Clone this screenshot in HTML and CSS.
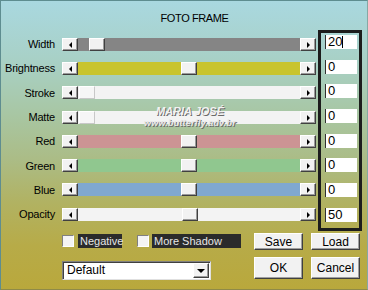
FILE: index.html
```html
<!DOCTYPE html>
<html lang="en">
<head>
    <meta charset="UTF-8">
    <title>Foto Frame</title>
    <link rel="stylesheet" href="styles.css">
</head>
<body>
<div class="dialog">
    <div class="title">FOTO FRAME</div>

    <div class="main">
        <div class="sliders">
            <div class="row">
                <span class="label">Width</span>
                <div class="scroll">
                    <span class="arrow left"></span>
                    <div class="track gray"><span class="thumb" style="left: 11px"></span></div>
                    <span class="arrow right"></span>
                </div>
            </div>
            <div class="row">
                <span class="label">Brightness</span>
                <div class="scroll">
                    <span class="arrow left"></span>
                    <div class="track yellow"><span class="thumb" style="left: 103px"></span></div>
                    <span class="arrow right"></span>
                </div>
            </div>
            <div class="row">
                <span class="label">Stroke</span>
                <div class="scroll">
                    <span class="arrow left"></span>
                    <div class="track white"><span class="thumb faded" style="left: 1px"></span></div>
                    <span class="arrow right"></span>
                </div>
            </div>
            <div class="row">
                <span class="label">Matte</span>
                <div class="scroll">
                    <span class="arrow left"></span>
                    <div class="track white"><span class="thumb faded" style="left: 1px"></span></div>
                    <span class="arrow right"></span>
                </div>
            </div>
            <div class="row">
                <span class="label">Red</span>
                <div class="scroll">
                    <span class="arrow left"></span>
                    <div class="track red"><span class="thumb" style="left: 103px"></span></div>
                    <span class="arrow right"></span>
                </div>
            </div>
            <div class="row">
                <span class="label">Green</span>
                <div class="scroll">
                    <span class="arrow left"></span>
                    <div class="track green"><span class="thumb" style="left: 103px"></span></div>
                    <span class="arrow right"></span>
                </div>
            </div>
            <div class="row">
                <span class="label">Blue</span>
                <div class="scroll">
                    <span class="arrow left"></span>
                    <div class="track blue"><span class="thumb" style="left: 103px"></span></div>
                    <span class="arrow right"></span>
                </div>
            </div>
            <div class="row">
                <span class="label">Opacity</span>
                <div class="scroll">
                    <span class="arrow left"></span>
                    <div class="track white"><span class="thumb" style="left: 104px"></span></div>
                    <span class="arrow right"></span>
                </div>
            </div>
        </div>

        <!-- value boxes inside the black frame -->
        <div class="values">
            <div class="field">20<span class="caret"></span></div>
            <div class="field">0</div>
            <div class="field">0</div>
            <div class="field">0</div>
            <div class="field">0</div>
            <div class="field">0</div>
            <div class="field">0</div>
            <div class="field">50</div>
        </div>
    </div>

    <div class="bottom">
        <div class="opts">
            <div class="checks">
                <span class="check"></span>
                <span class="check-label neg">Negative</span>
                <span class="check second"></span>
                <span class="check-label shadow">More Shadow</span>
            </div>
            <div class="select">
                <span class="select-text">Default</span>
                <span class="select-btn"></span>
            </div>
        </div>
        <div class="buttons">
            <span class="button">Save</span>
            <span class="button">Load</span>
            <span class="button">OK</span>
            <span class="button">Cancel</span>
        </div>
    </div>

    <div class="watermark">
        <div class="wm-name">MARIA JOSÉ</div>
        <div class="wm-url">www.butterfly.adv.br</div>
    </div>
</div>
</body>
</html>
```

FILE: styles.css
```css
body {
    margin: 0;
    font-family: "Liberation Sans", Arial, sans-serif;
}
.dialog {
    position: relative;
    width: 368px;
    height: 290px;
    box-sizing: border-box;
    border: 1px solid #5e8d90;
    border-right-color: #86a8a4;
    border-bottom-color: #8f8a48;
    background: linear-gradient(#a9d8e0 0%, #a8d0c4 22%, #a8c6a2 40%, #abbc86 55%, #b1b262 70%, #b7ab48 85%, #b9a83c 100%);
    font-size: 11px;
    color: #000;
}
.title {
    height: 29px;
    box-sizing: border-box;
    padding: 11px 0 0 21px;
    line-height: 13px;
    text-align: center;
    letter-spacing: -0.4px;
}

/* sliders and value frame */
.main {
    display: flex;
    height: 201px;
}
.sliders {
    width: 317px;
    padding-top: 2px;
}
.row {
    height: 24.3px;
    display: flex;
    align-items: center;
}
.label {
    width: 54px;
    margin-right: 7px;
    text-align: right;
    letter-spacing: -0.2px;
}
.scroll {
    width: 254px;
    height: 13px;
    display: flex;
}
.arrow, .thumb {
    position: relative;
    width: 16px;
    height: 13px;
    box-sizing: border-box;
    background-color: #f2f2f2;
    border-top: 1px solid #fff;
    border-left: 1px solid #fff;
    border-right: 1px solid #404040;
    border-bottom: 1px solid #404040;
    box-shadow: inset -1px -1px #9a9a9a;
}
.arrow::after {
    content: "";
    position: absolute;
    top: 3px;
    left: 6px;
    border-top: 3px solid transparent;
    border-bottom: 3px solid transparent;
}
.arrow.left::after {
    border-right: 3px solid #000;
}
.arrow.right::after {
    border-left: 3px solid #000;
}
.track {
    flex: 1;
    position: relative;
}
.thumb {
    position: absolute;
    top: 0;
}
.thumb.faded {
    background-color: #f6f6f6;
    border-right-color: #c8c8c8;
    border-bottom-color: #c8c8c8;
    box-shadow: none;
}
.gray { background-color: #858585; }
.yellow { background-color: #c9c42d; }
.white { background-color: #f3f3f3; }
.red { background-color: #cc9494; }
.green { background-color: #90c78f; }
.blue { background-color: #80a8d0; }

.values {
    width: 44px;
    height: 201px;
    box-sizing: border-box;
    border: 3px solid #1c1c1c;
    padding: 2px 2px 0 4px;
    display: flex;
    flex-direction: column;
    gap: 10.7px;
}
.field {
    width: 32px;
    height: 14px;
    box-sizing: border-box;
    background-color: #fff;
    border-left: 1px solid #303030;
    padding-left: 2px;
    font-size: 13px;
    line-height: 14px;
}
.caret {
    display: inline-block;
    width: 1px;
    height: 12px;
    background-color: #000;
    vertical-align: -2px;
}

/* bottom controls */
.bottom {
    display: flex;
    padding-left: 61px;
}
.opts {
    width: 192px;
}
.checks {
    display: flex;
    align-items: center;
    height: 14px;
    margin-top: 3px;
}
.check {
    width: 12px;
    height: 12px;
    box-sizing: border-box;
    background-color: #f4f4f4;
    border-top: 1px solid #808080;
    border-left: 1px solid #808080;
    border-right: 1px solid #fff;
    border-bottom: 1px solid #fff;
}
.check.second {
    margin-left: 15px;
}
.check-label {
    height: 14px;
    line-height: 14px;
    margin-left: 4px;
    padding-left: 2px;
    box-sizing: border-box;
    background-color: #2b2b2b;
    color: #e6e6e6;
}
.check-label.neg {
    width: 44px;
}
.check-label.shadow {
    width: 89px;
    margin-left: 3px;
}
.select {
    width: 149px;
    height: 19px;
    margin-top: 13px;
    box-sizing: border-box;
    display: flex;
    background-color: #fff;
    border-top: 1px solid #808080;
    border-left: 1px solid #808080;
    border-right: 1px solid #e0e0e0;
    border-bottom: 1px solid #e0e0e0;
    box-shadow: inset 1px 1px #404040;
}
.select-text {
    flex: 1;
    padding-left: 4px;
    font-size: 12px;
    line-height: 17px;
}
.select-btn {
    position: relative;
    width: 16px;
    height: 15px;
    margin: 1px 1px 0 0;
    box-sizing: border-box;
    background-color: #f2f2f2;
    border-top: 1px solid #fff;
    border-left: 1px solid #fff;
    border-right: 1px solid #404040;
    border-bottom: 1px solid #404040;
    box-shadow: inset -1px -1px #9a9a9a;
}
.select-btn::after {
    content: "";
    position: absolute;
    top: 5px;
    left: 3px;
    border-left: 4px solid transparent;
    border-right: 4px solid transparent;
    border-top: 4px solid #000;
}
.buttons {
    display: grid;
    grid-template-columns: 49px 49px;
    grid-template-rows: 17px 22px;
    column-gap: 8px;
    row-gap: 7px;
    margin-top: 2px;
}
.button {
    display: flex;
    align-items: center;
    justify-content: center;
    box-sizing: border-box;
    background-color: #f2f2f2;
    border-top: 1px solid #fff;
    border-left: 1px solid #fff;
    border-right: 1px solid #404040;
    border-bottom: 1px solid #404040;
    box-shadow: inset -1px -1px #a0a0a0;
    font-size: 12px;
}

/* watermark over the sliders */
.watermark {
    position: absolute;
    left: 139px;
    top: 103px;
    width: 100px;
    text-align: center;
    color: #f2f2f2;
    font-weight: bold;
    font-style: italic;
    text-shadow: 1px 1px 0 #6a6a6a;
}
.wm-name {
    font-size: 11px;
    line-height: 14px;
}
.wm-url {
    font-size: 9px;
    line-height: 10px;
    letter-spacing: 0.2px;
    color: #e6e6e6;
}
```
